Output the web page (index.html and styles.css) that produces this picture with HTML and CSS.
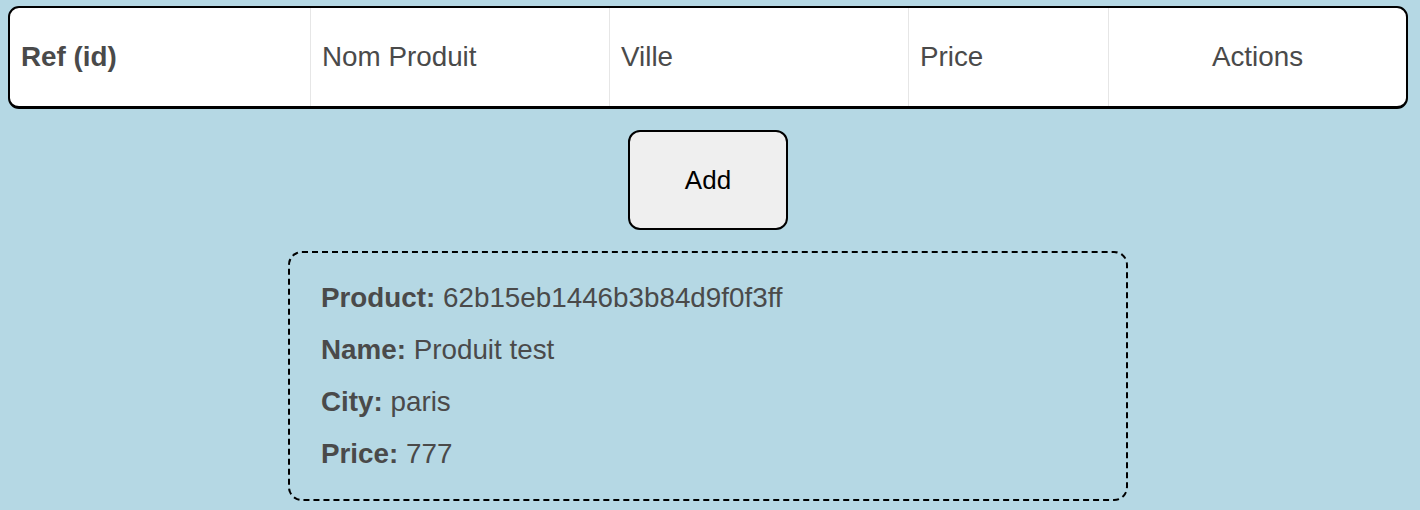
FILE: index.html
```html
<!DOCTYPE html>
<html lang="fr">
<head>
<meta charset="utf-8">
<title>Produits</title>
<link rel="stylesheet" href="styles.css">
</head>
<body>
<main class="page">
  <div class="table">
    <div class="cell bold">Ref (id)</div>
    <div class="cell">Nom Produit</div>
    <div class="cell">Ville</div>
    <div class="cell">Price</div>
    <div class="cell center">Actions</div>
  </div>
  <button class="add-btn" type="button">Add</button>
  <section class="details">
    <p><strong>Product:</strong> 62b15eb1446b3b84d9f0f3ff</p>
    <p><strong>Name:</strong> Produit test</p>
    <p><strong>City:</strong> paris</p>
    <p><strong>Price:</strong> 777</p>
  </section>
</main>
</body>
</html>
```
FILE: styles.css
```css
html, body {
  margin: 0;
  padding: 0;
  background: #b5d8e4;
  font-family: "Liberation Sans", Arial, Helvetica, sans-serif;
  color: #4a4a4a;
}

.page {
  width: 1400px;
  margin-left: 8px;
  padding-top: 6px;
  display: flex;
  flex-direction: column;
  align-items: center;
  gap: 21px;
}

.table {
  width: 1400px;
  box-sizing: border-box;
  background: #fff;
  border: 2px solid #000;
  border-bottom-width: 3px;
  border-radius: 11px;
  display: grid;
  grid-template-columns: 300px 299px 299px 200px 1fr;
  overflow: hidden;
}

.cell {
  font-size: 27.8px;
  line-height: 31px;
  padding: 33px 11px 34px;
}

.cell + .cell {
  border-left: 1px solid #e6e6e6;
}

.bold {
  font-weight: bold;
}

.center {
  text-align: center;
}

.add-btn {
  width: 160px;
  height: 100px;
  box-sizing: border-box;
  border: 2px solid #000;
  border-radius: 12px;
  background: #efefef;
  color: #000;
  font-family: "Liberation Sans", Arial, Helvetica, sans-serif;
  font-size: 26px;
  padding: 0;
  display: flex;
  align-items: center;
  justify-content: center;
}

.details {
  width: 840px;
  box-sizing: border-box;
  border: 2px dashed #000;
  border-radius: 14px;
  padding: 29px 30px 30px 31px;
  display: flex;
  flex-direction: column;
  gap: 21px;
}

.details p {
  margin: 0;
  font-size: 27.8px;
  line-height: 31px;
}
```
